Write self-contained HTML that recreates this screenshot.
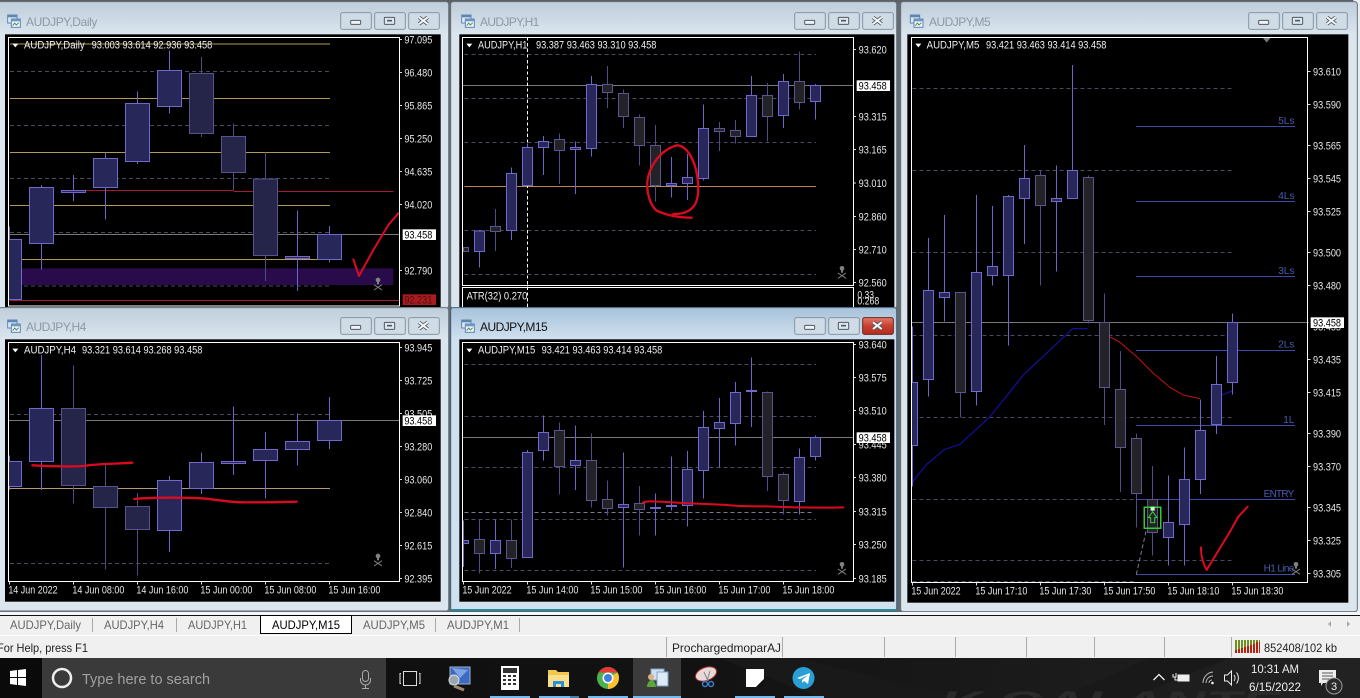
<!DOCTYPE html>
<html><head><meta charset="utf-8"><title>MT4</title>
<style>
html,body{margin:0;padding:0;width:1360px;height:698px;overflow:hidden;background:#e4ebf1}
svg{position:absolute;left:0;top:0;display:block}
text{font-family:"Liberation Sans",sans-serif}
.a{font-size:32px;fill:#e6e6e6}
.h{font-size:32px;fill:#f0f0f0}
.t{font-size:36px;fill:#8d99a5}
.l{font-size:30px;fill:#4a5bb0}
.k{font-size:32px;fill:#000}
.c{shape-rendering:crispEdges;fill:none;stroke-width:3}
.wu{stroke:#6f65c8}.wd{stroke:#4f4b86}
.bu{fill:#28275a;stroke:#7268cc;stroke-width:3;shape-rendering:crispEdges}
.bd{fill:#25254a;stroke:#57538f;stroke-width:3;shape-rendering:crispEdges}
.bk{fill:#232327;stroke:#5a5590;stroke-width:3;shape-rendering:crispEdges}
.g{stroke:#4a4a5e;stroke-dasharray:12 9}
.au{stroke:#b39a55}
.p{stroke:#777}
.tk{stroke:#ddd}
.r{fill:none;stroke:#dc0a20;stroke-linecap:round;stroke-linejoin:round}
.b{font-size:12px;fill:#666}
.s{font-size:12px;fill:#222}
.sp{stroke:#aaa;stroke-width:1;shape-rendering:crispEdges}
</style></head><body>
<svg width="1360" height="698" viewBox="0 0 4080 2094" xmlns="http://www.w3.org/2000/svg">
<defs>
<linearGradient id="f" gradientUnits="userSpaceOnUse" x1="0" y1="8" x2="0" y2="103"><stop offset="0" stop-color="#bfcedb"/><stop offset="1" stop-color="#dae5ee"/></linearGradient>
<linearGradient id="fa" gradientUnits="userSpaceOnUse" x1="0" y1="8" x2="0" y2="103"><stop offset="0" stop-color="#a8c2da"/><stop offset="1" stop-color="#cfe0ef"/></linearGradient>
<linearGradient id="rd" x1="0" y1="0" x2="0" y2="1"><stop offset="0" stop-color="#e0786a"/><stop offset=".5" stop-color="#c8402f"/><stop offset="1" stop-color="#b02a20"/></linearGradient>
<g id="bt">
<rect x="0" y="38" width="92" height="50" rx="6" fill="#cfdbe5" stroke="#8796a4" stroke-width="3"/>
<rect x="102" y="38" width="92" height="50" rx="6" fill="#cfdbe5" stroke="#8796a4" stroke-width="3"/>
<rect x="204" y="38" width="92" height="50" rx="6" fill="#cfdbe5" stroke="#8796a4" stroke-width="3"/>
<rect x="30" y="61" width="30" height="12" rx="2" fill="#eef3f7" stroke="#4d5a66" stroke-width="3"/>
<rect x="131" y="52" width="31" height="21" rx="2" fill="#dfe7ee" stroke="#4d5a66" stroke-width="3"/><path d="M139 62h15" stroke="#4d5a66" stroke-width="5"/>
</g>
<g id="x"><path d="M-13 -10L13 10M13 -10L-13 10" stroke="#4d5a66" stroke-width="11"/><path d="M-13 -10L13 10M13 -10L-13 10" stroke="#f4f7fa" stroke-width="6"/></g>
<g id="ic"><rect x="0" y="0" width="28" height="24" fill="#dfeaf4" stroke="#5d86b3" stroke-width="3"/><rect x="0" y="0" width="28" height="7" fill="#5d86b3"/><rect x="11" y="12" width="27" height="25" fill="#eef5fb" stroke="#5d86b3" stroke-width="3"/><rect x="11" y="12" width="27" height="7" fill="#6c95c2"/><path d="M15 32L21 24L26 30L33 23" fill="none" stroke="#5b8a5b" stroke-width="3"/></g>
<g id="sk"><circle cx="0" cy="-12" r="7" fill="#808080"/><rect x="-3" y="-6" width="6" height="7" fill="#808080"/><path d="M-12 2L12 18M12 2L-12 18" stroke="#808080" stroke-width="3"/></g>
</defs>

<rect width="4080" height="2094" fill="#636a72"/>
<rect x="0" y="0" width="4080" height="6" fill="#5a5f66"/>
<rect x="4060" y="0" width="20" height="1840" fill="#e6edf3"/>

<!-- DAILY -->
<rect x="-6" y="5" width="1352" height="920" rx="8" fill="url(#f)" stroke="#6a7078" stroke-width="3"/>
<use href="#ic" x="23" y="45"/>
<text x="78" y="78" class="t" textLength="214">AUDJPY,Daily</text>
<use href="#bt" x="1022" y="0"/><use href="#x" x="1270" y="62"/>
<rect x="15" y="103" width="1307" height="818" fill="#000"/>
<g>
<rect x="65" y="805" width="1115" height="50" fill="#290b4b"/>
<path class="c g" d="M30 214H990M30 376H990M30 535H990M30 697H990M30 858H990"/>
<path class="c au" d="M30 132H990M30 295H990M30 457H990M30 616H990M30 778H990"/>
<path class="c" stroke="#a8183a" d="M225 571H700M700 574H1180M30 901H1198"/>
<path class="c p" d="M25 703H1198"/>
<path class="c wu" d="M28 680V718M124 555V808M220 525V603M316 458V658M412 275V492M508 152V340M892 632V873M988 678V788"/>
<path class="c wd" d="M604 171V411M700 370V570M796 458V843"/>
<path class="bu" d="M25 718h40v180h-40zM88 562h73v168h-73zM184 571h73v6h-73zM280 475h73v88h-73zM376 310h73v174h-73zM472 211h73v108h-73zM856 769h73v6h-73zM952 703h73v75h-73z"/>
<path class="bd" d="M568 220h73v180h-73zM664 409h73v108h-73zM760 537h73v230h-73z"/>
<path class="r" stroke-width="6" d="M1060 778L1077 828L1120 750L1165 675L1195 640"/>
<use href="#sk" x="1134" y="852"/>
<rect x="25" y="112" width="1173" height="806" class="c" stroke="#fff"/>
<path d="M37 131H55L46 142Z" fill="#fff"/>
<text x="72" y="146" class="h" textLength="182" lengthAdjust="spacingAndGlyphs">AUDJPY,Daily</text><text x="275" y="146" class="h" textLength="362" lengthAdjust="spacingAndGlyphs">93.003 93.614 92.936 93.458</text>
<path class="c tk" d="M1198 118h8M1198 217h8M1198 316h8M1198 415h8M1198 514h8M1198 613h8M1198 811h8"/>
<text class="a" textLength="84" lengthAdjust="spacingAndGlyphs" x="1213" y="130">97.095</text><text class="a" textLength="84" lengthAdjust="spacingAndGlyphs" x="1213" y="229">96.480</text><text class="a" textLength="84" lengthAdjust="spacingAndGlyphs" x="1213" y="328">95.865</text><text class="a" textLength="84" lengthAdjust="spacingAndGlyphs" x="1213" y="427">95.250</text><text class="a" textLength="84" lengthAdjust="spacingAndGlyphs" x="1213" y="526">94.635</text><text class="a" textLength="84" lengthAdjust="spacingAndGlyphs" x="1213" y="625">94.020</text><text class="a" textLength="84" lengthAdjust="spacingAndGlyphs" x="1213" y="823">92.790</text>
<rect x="1208" y="688" width="100" height="32" fill="#fff"/><text class="k" textLength="84" lengthAdjust="spacingAndGlyphs" x="1213" y="716">93.458</text>
<rect x="1208" y="883" width="100" height="32" fill="#a81c20"/><text class="k" textLength="84" lengthAdjust="spacingAndGlyphs" x="1213" y="911" style="fill:#4a1015">92.231</text>
</g>

<!-- H1 -->
<g transform="translate(1350,0)">
<rect x="2" y="5" width="1338" height="920" rx="8" fill="url(#f)" stroke="#6a7078" stroke-width="3"/>
<use href="#ic" x="35" y="45"/>
<text x="90" y="78" class="t" textLength="178">AUDJPY,H1</text>
<use href="#bt" x="1034" y="0"/><use href="#x" x="1282" y="62"/>
<rect x="28" y="103" width="1305" height="818" fill="#000"/>
<path class="c g" d="M43 163H1098M43 295H1098M43 427H1098M43 691H1098M43 823H1098"/>
<path class="c" stroke="#b8894f" d="M43 559H1098"/>
<path class="c p" d="M37 256H1210"/>
<path class="c" stroke="#fff" stroke-dasharray="10 7" d="M232 112V921"/>
<path class="c wu" d="M88 690V802M184 502V720M232 430V556M280 408V525M376 424V582M424 228V470M664 471V592M712 462V600M760 313V542M904 228V409M1000 222V384M1096 252V358"/>
<path class="c wd" d="M136 627V753M328 400V552M472 198V324M520 268V384M568 343V497M616 375V604M808 366V453M856 360V430M952 249V424M1048 154V328"/>
<path class="bu" d="M73 693h31v61h-31zM169 520h31v171h-31zM217 442h31v114h-31zM265 424h31v18h-31zM361 442h31v6h-31zM409 253h31v192h-31zM649 550h31v6h-31zM697 532h31v18h-31zM745 385h31v151h-31zM889 286h31v123h-31zM985 244h31v102h-31zM1081 256h31v48h-31z"/>
<path class="bk" d="M40 743h16v11h-16zM121 680h31v14h-31zM313 418h31v33h-31zM457 253h31v24h-31zM505 280h31v69h-31zM553 352h31v84h-31zM601 436h31v120h-31zM793 385h31v9h-31zM841 391h31v18h-31zM937 286h31v63h-31zM1033 244h31v63h-31z"/>
<path class="r" stroke-width="7" d="M725 653C700 653 660 650 620 632C600 615 590 580 592 545C597 500 630 450 680 436C710 436 735 480 742 530C748 570 745 610 725 625C710 640 690 642 670 642"/>
<use href="#sk" x="1176" y="817"/>
<rect x="37" y="112" width="1173" height="744" class="c" stroke="#fff"/>
<rect x="37" y="862" width="1173" height="70" class="c" stroke="#fff"/>
<path d="M49 131H67L58 142Z" fill="#fff"/>
<text x="84" y="146" class="h" textLength="148" lengthAdjust="spacingAndGlyphs">AUDJPY,H1</text><text x="258" y="146" class="h" textLength="361" lengthAdjust="spacingAndGlyphs">93.387 93.463 93.310 93.458</text>
<text x="50" y="899" class="h" textLength="182" lengthAdjust="spacingAndGlyphs">ATR(32) 0.270</text>
<path class="c tk" d="M1210 148h8M1210 349h8M1210 448h8M1210 549h8M1210 649h8M1210 748h8M1210 847h8"/>
<text class="a" textLength="84" lengthAdjust="spacingAndGlyphs" x="1226" y="160">93.620</text><text class="a" textLength="84" lengthAdjust="spacingAndGlyphs" x="1226" y="361">93.315</text><text class="a" textLength="84" lengthAdjust="spacingAndGlyphs" x="1226" y="460">93.165</text><text class="a" textLength="84" lengthAdjust="spacingAndGlyphs" x="1226" y="561">93.010</text><text class="a" textLength="84" lengthAdjust="spacingAndGlyphs" x="1226" y="661">92.860</text><text class="a" textLength="84" lengthAdjust="spacingAndGlyphs" x="1226" y="760">92.710</text><text class="a" textLength="84" lengthAdjust="spacingAndGlyphs" x="1226" y="859">92.560</text>
<rect x="1220" y="241" width="100" height="32" fill="#fff"/><text class="k" textLength="84" lengthAdjust="spacingAndGlyphs" x="1226" y="268">93.458</text>
<text class="a" x="1222" y="895" textLength="50" lengthAdjust="spacingAndGlyphs">0.33</text><text class="a" x="1222" y="914" textLength="66" lengthAdjust="spacingAndGlyphs">0.268</text>
</g>

<!-- M5 -->
<g transform="translate(2700,0)">
<rect x="2" y="5" width="1370" height="1830" rx="8" fill="url(#f)" stroke="#6a7078" stroke-width="3"/>
<use href="#ic" x="31" y="45"/>
<text x="87" y="78" class="t" textLength="185">AUDJPY,M5</text>
<use href="#bt" x="1046" y="0"/><use href="#x" x="1294" y="62"/>
<rect x="22" y="103" width="1323" height="1705" fill="#000"/>
<path class="c g" d="M38 265H1000M38 511H1000M38 757H1000M38 1006H1000M38 1252H1000M38 1498H708M38 1681H996M38 1744H708"/>
<path class="c" stroke="#3b4ba8" d="M708 379H1185M708 604H1185M708 829H1185M708 1051H1185M708 1276H1185M708 1498H1185M708 1723H1185"/>
<path class="c p" d="M34 967H1225"/>
<text class="l" x="1183" y="372" text-anchor="end">5Ls</text><text class="l" x="1183" y="597" text-anchor="end">4Ls</text><text class="l" x="1183" y="822" text-anchor="end">3Ls</text><text class="l" x="1183" y="1043" text-anchor="end">2Ls</text><text class="l" x="1183" y="1269" text-anchor="end">1L</text><text class="l" x="1183" y="1491" text-anchor="end" textLength="92">ENTRY</text><text class="l" x="1183" y="1715" text-anchor="end" textLength="92">H1 Line</text>
<path fill="none" stroke="#10108c" stroke-width="4" d="M38 1445L80 1393L134 1348L180 1333L270 1250L370 1125L450 1050L518 986H563M945 1193L996 1173"/>
<path fill="none" stroke="#c01414" stroke-width="3" d="M614 1002L660 1027L710 1070L760 1120L810 1162L850 1185L900 1196"/>
<path class="c wu" d="M38 980V1460M86 714V1190M134 645V965M230 585V1217M278 618V857M326 585V1037M374 435V732M470 496V815M518 195V595M806 1426V1697M854 1342V1697M902 1198V1482M950 1068V1302M998 940V1183"/>
<path class="c wd" d="M182 877V1252M422 511V857M566 526V970M614 880V1275M662 1053V1476M710 1300V1583M758 1398V1667"/>
<path class="bu" d="M35 1147h18v190h-18zM70 871h31v267h-31zM118 877h31v15h-31zM214 817h31v357h-31zM262 799h31v27h-31zM310 589h31v237h-31zM358 535h31v60h-31zM454 595h31v9h-31zM502 511h31v84h-31zM790 1567h31v45h-31zM838 1438h31v135h-31zM886 1291h31v147h-31zM934 1153h31v120h-31zM982 967h31v180h-31z"/>
<path class="bk" d="M166 877h31v300h-31zM406 526h31v90h-31zM550 532h31v429h-31zM598 967h31v195h-31zM646 1168h31v174h-31zM694 1315h31v165h-31zM742 1498h31v99h-31z"/>
<path fill="none" stroke="#7d7d9a" stroke-width="3" stroke-dasharray="12 8" d="M709 1723L740 1585"/>
<rect x="733" y="1522" width="49" height="63" class="c" stroke="#2ecc2e" style="stroke-width:4"/>
<path d="M758 1535L771 1553H764V1568H752V1553H745Z" fill="none" stroke="#36d036" stroke-width="3"/>
<rect x="752" y="1520" width="12" height="12" fill="#c8ffc0"/>
<path class="r" stroke-width="6" d="M903 1642C902 1670 912 1695 920 1710L990 1595L1015 1550L1043 1520"/>
<use href="#sk" x="1188" y="1705"/>
<path d="M1088 113H1112L1100 128Z" fill="#777"/>
<rect x="34" y="112" width="1189" height="1635" class="c" stroke="#fff"/>
<path d="M46 131H64L55 142Z" fill="#fff"/>
<text x="80" y="146" class="h" textLength="158" lengthAdjust="spacingAndGlyphs">AUDJPY,M5</text><text x="258" y="146" class="h" textLength="361" lengthAdjust="spacingAndGlyphs">93.421 93.463 93.414 93.458</text>
<path class="c tk" d="M1223 214h8M1223 313h8M1223 436h8M1223 535h8M1223 634h8M1223 757h8M1223 856h8M1223 1078h8M1223 1177h8M1223 1300h8M1223 1399h8M1223 1522h8M1223 1621h8M1223 1720h8M37 1747v9M229 1747v9M421 1747v9M613 1747v9M805 1747v9M997 1747v9"/>
<text class="a" textLength="84" lengthAdjust="spacingAndGlyphs" x="1239" y="226">93.610</text><text class="a" textLength="84" lengthAdjust="spacingAndGlyphs" x="1239" y="325">93.590</text><text class="a" textLength="84" lengthAdjust="spacingAndGlyphs" x="1239" y="448">93.565</text><text class="a" textLength="84" lengthAdjust="spacingAndGlyphs" x="1239" y="547">93.545</text><text class="a" textLength="84" lengthAdjust="spacingAndGlyphs" x="1239" y="646">93.525</text><text class="a" textLength="84" lengthAdjust="spacingAndGlyphs" x="1239" y="769">93.500</text><text class="a" textLength="84" lengthAdjust="spacingAndGlyphs" x="1239" y="868">93.480</text><text class="a" textLength="84" lengthAdjust="spacingAndGlyphs" x="1239" y="1090">93.435</text><text class="a" textLength="84" lengthAdjust="spacingAndGlyphs" x="1239" y="1189">93.415</text><text class="a" textLength="84" lengthAdjust="spacingAndGlyphs" x="1239" y="1312">93.390</text><text class="a" textLength="84" lengthAdjust="spacingAndGlyphs" x="1239" y="1411">93.370</text><text class="a" textLength="84" lengthAdjust="spacingAndGlyphs" x="1239" y="1534">93.345</text><text class="a" textLength="84" lengthAdjust="spacingAndGlyphs" x="1239" y="1633">93.325</text><text class="a" textLength="84" lengthAdjust="spacingAndGlyphs" x="1239" y="1732">93.305</text>
<text class="a" textLength="84" lengthAdjust="spacingAndGlyphs" x="1239" y="992">93.455</text>
<rect x="1232" y="952" width="100" height="32" fill="#fff"/><text class="k" textLength="84" lengthAdjust="spacingAndGlyphs" x="1239" y="979">93.458</text>
<text class="a" textLength="148" lengthAdjust="spacingAndGlyphs" x="34" y="1784">15 Jun 2022</text><text class="a" textLength="156" lengthAdjust="spacingAndGlyphs" x="226" y="1784">15 Jun 17:10</text><text class="a" textLength="156" lengthAdjust="spacingAndGlyphs" x="418" y="1784">15 Jun 17:30</text><text class="a" textLength="156" lengthAdjust="spacingAndGlyphs" x="610" y="1784">15 Jun 17:50</text><text class="a" textLength="156" lengthAdjust="spacingAndGlyphs" x="802" y="1784">15 Jun 18:10</text><text class="a" textLength="156" lengthAdjust="spacingAndGlyphs" x="994" y="1784">15 Jun 18:30</text>
</g>

<!-- H4 -->
<g transform="translate(0,915)">
<rect x="-6" y="8" width="1352" height="910" rx="8" fill="url(#f)" stroke="#6a7078" stroke-width="3"/>
<use href="#ic" x="23" y="45"/>
<text x="78" y="78" class="t" textLength="181">AUDJPY,H4</text>
<use href="#bt" x="1022" y="0"/><use href="#x" x="1270" y="62"/>
<rect x="15" y="103" width="1307" height="787" fill="#000"/>
<path class="c g" d="M30 328H990M30 775H990"/>
<path class="c" stroke="#b39a70" d="M30 550H990"/>
<path class="c p" d="M25 346H1198"/>
<path class="c wu" d="M28 452V555M124 150V555M508 513V741M604 443V567M700 305V510M796 381V581M892 325V481M988 276V432"/>
<path class="c wd" d="M220 181V595M316 480V793M412 564V812"/>
<path class="bu" d="M25 469h40v76h-40zM88 310h73v159h-73zM472 526h73v151h-73zM568 472h73v78h-73zM664 469h73v6h-73zM760 433h73v33h-73zM856 409h73v24h-73zM952 346h73v60h-73z"/>
<path class="bd" d="M184 310h73v231h-73zM280 544h73v63h-73zM376 604h73v70h-73z"/>
<path class="r" stroke-width="7" d="M97 481C150 484 200 486 250 483C300 475 350 477 397 473M403 582C450 577 560 577 620 581C670 587 700 593 750 592C800 592 850 591 890 590"/>
<use href="#sk" x="1134" y="765"/>
<rect x="25" y="112" width="1173" height="717" class="c" stroke="#fff"/>
<path d="M37 131H55L46 142Z" fill="#fff"/>
<text x="72" y="146" class="h" textLength="156" lengthAdjust="spacingAndGlyphs">AUDJPY,H4</text><text x="246" y="146" class="h" textLength="361" lengthAdjust="spacingAndGlyphs">93.321 93.614 93.268 93.458</text>
<path class="c tk" d="M1198 127h8M1198 226h8M1198 325h8M1198 424h8M1198 523h8M1198 622h8M1198 721h8M1198 820h8M28 829v9M220 829v9M412 829v9M604 829v9M796 829v9M988 829v9"/>
<text class="a" textLength="84" lengthAdjust="spacingAndGlyphs" x="1213" y="139">93.945</text><text class="a" textLength="84" lengthAdjust="spacingAndGlyphs" x="1213" y="238">93.725</text><text class="a" textLength="84" lengthAdjust="spacingAndGlyphs" x="1213" y="337">93.505</text><text class="a" textLength="84" lengthAdjust="spacingAndGlyphs" x="1213" y="436">93.280</text><text class="a" textLength="84" lengthAdjust="spacingAndGlyphs" x="1213" y="535">93.060</text><text class="a" textLength="84" lengthAdjust="spacingAndGlyphs" x="1213" y="634">92.840</text><text class="a" textLength="84" lengthAdjust="spacingAndGlyphs" x="1213" y="733">92.615</text><text class="a" textLength="84" lengthAdjust="spacingAndGlyphs" x="1213" y="832">92.395</text>
<rect x="1208" y="331" width="100" height="32" fill="#fff"/><text class="k" textLength="84" lengthAdjust="spacingAndGlyphs" x="1213" y="358">93.458</text>
<text class="a" textLength="148" lengthAdjust="spacingAndGlyphs" x="25" y="866">14 Jun 2022</text><text class="a" textLength="156" lengthAdjust="spacingAndGlyphs" x="217" y="866">14 Jun 08:00</text><text class="a" textLength="156" lengthAdjust="spacingAndGlyphs" x="409" y="866">14 Jun 16:00</text><text class="a" textLength="156" lengthAdjust="spacingAndGlyphs" x="601" y="866">15 Jun 00:00</text><text class="a" textLength="156" lengthAdjust="spacingAndGlyphs" x="793" y="866">15 Jun 08:00</text><text class="a" textLength="156" lengthAdjust="spacingAndGlyphs" x="985" y="866">15 Jun 16:00</text>
</g>

<!-- M15 active -->
<g transform="translate(1350,915)">
<rect x="2" y="8" width="1338" height="910" rx="8" fill="url(#fa)" stroke="#3d5f7c" stroke-width="3"/>
<rect x="2" y="912" width="1338" height="6" fill="#2e8a94"/>
<use href="#ic" x="35" y="45"/>
<text x="90" y="78" class="t" textLength="203" style="fill:#111">AUDJPY,M15</text>
<use href="#bt" x="1034" y="0"/>
<rect x="1238" y="38" width="92" height="50" rx="6" fill="url(#rd)" stroke="#7a2a22" stroke-width="3"/><use href="#x" x="1282" y="62"/>
<rect x="28" y="103" width="1305" height="787" fill="#000"/>
<path class="c g" d="M43 178H1098M43 335H1098M43 487H1098M43 643H1098M43 797H1098"/>
<path class="c" stroke="#7a7a90" stroke-dasharray="12 9" d="M43 622H1092"/>
<path class="c p" d="M37 397H1210"/>
<path class="c wu" d="M40 646V786M136 643V792M232 435V757M280 331V466M376 361V555M520 443V788M616 565V692M664 454V616M712 438V665M760 318V581M808 279V487M856 231V421M904 157V366M1048 430V628M1096 391V467"/>
<path class="c wd" d="M88 643V805M184 643V789M328 352V568M424 385V608M472 526V631M568 543V692M952 259V558M1000 502V628"/>
<path class="bu" d="M40 707h16v9h-16zM121 706h31v39h-31zM217 442h31v315h-31zM265 382h31v54h-31zM361 466h31v16h-31zM505 598h31v9h-31zM601 607h31v3h-31zM649 601h31v3h-31zM697 493h31v108h-31zM745 367h31v129h-31zM793 352h31v18h-31zM841 262h31v93h-31zM889 256h31v3h-31zM1033 457h31v132h-31zM1081 397h31v57h-31z"/>
<path class="bk" d="M73 703h31v42h-31zM169 706h31v54h-31zM313 376h31v108h-31zM409 466h31v120h-31zM457 583h31v27h-31zM553 595h31v18h-31zM937 262h31v252h-31zM985 508h31v78h-31z"/>
<path class="r" stroke-width="6" d="M578 593C590 587 610 589 650 591C720 596 780 597 830 600C860 604 900 604 950 604C1020 607 1100 609 1180 607"/>
<use href="#sk" x="1176" y="790"/>
<rect x="37" y="112" width="1173" height="717" class="c" stroke="#fff"/>
<path d="M49 131H67L58 142Z" fill="#fff"/>
<text x="84" y="146" class="h" textLength="172" lengthAdjust="spacingAndGlyphs">AUDJPY,M15</text><text x="275" y="146" class="h" textLength="362" lengthAdjust="spacingAndGlyphs">93.421 93.463 93.414 93.458</text>
<path class="c tk" d="M1210 118h8M1210 217h8M1210 316h8M1210 419h8M1210 517h8M1210 619h8M1210 718h8M1210 820h8M40 829v9M232 829v9M424 829v9M616 829v9M808 829v9M1000 829v9"/>
<text class="a" textLength="84" lengthAdjust="spacingAndGlyphs" x="1226" y="130">93.640</text><text class="a" textLength="84" lengthAdjust="spacingAndGlyphs" x="1226" y="229">93.575</text><text class="a" textLength="84" lengthAdjust="spacingAndGlyphs" x="1226" y="328">93.510</text><text class="a" textLength="84" lengthAdjust="spacingAndGlyphs" x="1226" y="431">93.445</text><text class="a" textLength="84" lengthAdjust="spacingAndGlyphs" x="1226" y="529">93.380</text><text class="a" textLength="84" lengthAdjust="spacingAndGlyphs" x="1226" y="631">93.315</text><text class="a" textLength="84" lengthAdjust="spacingAndGlyphs" x="1226" y="730">93.250</text><text class="a" textLength="84" lengthAdjust="spacingAndGlyphs" x="1226" y="832">93.185</text>
<rect x="1220" y="382" width="100" height="32" fill="#fff"/><text class="k" textLength="84" lengthAdjust="spacingAndGlyphs" x="1226" y="409">93.458</text>
<text class="a" textLength="148" lengthAdjust="spacingAndGlyphs" x="37" y="866">15 Jun 2022</text><text class="a" textLength="156" lengthAdjust="spacingAndGlyphs" x="229" y="866">15 Jun 14:00</text><text class="a" textLength="156" lengthAdjust="spacingAndGlyphs" x="421" y="866">15 Jun 15:00</text><text class="a" textLength="156" lengthAdjust="spacingAndGlyphs" x="613" y="866">15 Jun 16:00</text><text class="a" textLength="156" lengthAdjust="spacingAndGlyphs" x="805" y="866">15 Jun 17:00</text><text class="a" textLength="156" lengthAdjust="spacingAndGlyphs" x="997" y="866">15 Jun 18:00</text>
</g>
</svg>

<svg width="1360" height="698" viewBox="0 0 1360 698" xmlns="http://www.w3.org/2000/svg">
<defs><linearGradient id="tb" x1="0" y1="0" x2="1" y2="0"><stop offset="0" stop-color="#0d0d0d"/><stop offset=".5" stop-color="#121212"/><stop offset="1" stop-color="#222"/></linearGradient></defs>
<!-- tab bar -->
<rect x="0" y="612" width="1360" height="46" fill="#f0f0f0"/>
<rect x="0" y="612" width="1360" height="3" fill="#f4f7fa"/>
<rect x="0" y="615" width="1360" height="1" fill="#111"/>
<rect x="0" y="635" width="1360" height="1" fill="#fff"/>
<text class="b" x="10" y="629" textLength="71" lengthAdjust="spacingAndGlyphs">AUDJPY,Daily</text>
<path class="sp" d="M92.500 618V632M176.500 618V632M519.500 618V632M435.500 618V632"/>
<text class="b" x="104" y="629" textLength="60" lengthAdjust="spacingAndGlyphs">AUDJPY,H4</text>
<text class="b" x="188" y="629" textLength="59" lengthAdjust="spacingAndGlyphs">AUDJPY,H1</text>
<rect x="260.500" y="615.500" width="91" height="18" fill="#fff" stroke="#000"/>
<text x="272" y="629" font-size="12" fill="#000" textLength="68" lengthAdjust="spacingAndGlyphs">AUDJPY,M15</text>
<text class="b" x="363" y="629" textLength="62" lengthAdjust="spacingAndGlyphs">AUDJPY,M5</text>
<text class="b" x="447" y="629" textLength="62" lengthAdjust="spacingAndGlyphs">AUDJPY,M1</text>
<path d="M1331 621l-3 3 3 3zM1347 621l3 3-3 3z" fill="#aaa"/>
<!-- status -->
<text class="s" x="-3" y="652" textLength="91" lengthAdjust="spacingAndGlyphs">For Help, press F1</text>
<path class="sp" d="M666.500 637V657M782.500 637V657M884.500 637V657M955.500 637V657M1026.500 637V657M1094.500 637V657M1164.500 637V657M1231.500 637V657"/>
<text class="s" x="672" y="652" textLength="109" lengthAdjust="spacingAndGlyphs">ProchargedmoparAJ</text>
<g shape-rendering="crispEdges">
<rect x="1235" y="640" width="25" height="13" fill="#6f8f22"/>
<path d="M1235 650L1238 650V649H1241V648H1244V647H1247V646H1250V645H1253V644H1256V642H1260V653H1235Z" fill="#b82010"/>
<path fill="#f0f0f0" d="M1237 640h1v13h-1zM1240 640h1v13h-1zM1243 640h1v13h-1zM1246 640h1v13h-1zM1249 640h1v13h-1zM1252 640h1v13h-1zM1255 640h1v13h-1zM1258 640h1v13h-1z"/>
</g>
<text class="s" x="1264" y="652" textLength="73" lengthAdjust="spacingAndGlyphs">852408/102 kb</text>
<!-- taskbar -->
<rect x="0" y="658" width="1360" height="40" fill="url(#tb)"/>
<path d="M720 658H800L960 698H820ZM1150 658H1230L1130 698H1060Z" fill="#191919"/>
<text x="940" y="712" font-size="30" font-style="italic" font-weight="bold" fill="#2a2a2a" textLength="340" lengthAdjust="spacingAndGlyphs">K GALANTE</text>
<rect x="0" y="658" width="42" height="40" fill="#0a0a0a"/>
<rect x="42" y="658" width="344" height="40" fill="#3a3a3a"/>
<rect x="633" y="658" width="48" height="40" fill="#3b3b3b"/>
<path d="M10 671l7-1v7h-7zM18 670l8-1v8h-8zM10 678h7v7l-7-1zM18 678h8v8l-8-1z" fill="#fff"/>
<circle cx="62" cy="678" r="9" fill="none" stroke="#eee" stroke-width="2.500"/>
<text x="82" y="684" font-size="15" fill="#a0a0a0" textLength="128" lengthAdjust="spacingAndGlyphs">Type here to search</text>
<rect x="362.500" y="670.500" width="6" height="11" rx="3" fill="none" stroke="#aaa"/><path d="M360.500 678v2a5 5 0 0 0 10 0v-2M365.500 685v3M362 688.500h7" fill="none" stroke="#aaa"/>
<rect x="403.500" y="671.500" width="13" height="14" fill="none" stroke="#ddd"/><path d="M401 673.500h-1v10h1M419 673.500h1v10h-1" fill="none" stroke="#ddd"/>
<!-- network -->
<rect x="450" y="667" width="20" height="17" fill="#3d6bc4" stroke="#9fb0cc"/><path d="M452 668l8 10 8-8" fill="#7fa3e0"/><circle cx="454" cy="680" r="5" fill="#9aa6b0" stroke="#ddd"/><path d="M454 686l10 4" stroke="#a08a70" stroke-width="3"/>
<!-- calc -->
<rect x="501" y="666" width="18" height="24" fill="#fff"/><rect x="503" y="668" width="14" height="5" fill="#333"/>
<path d="M503 676h3M508 676h3M513 676h3M503 680h3M508 680h3M513 680h3M503 684h3M508 684h3M513 684h3" stroke="#333" stroke-width="2"/>
<!-- folder -->
<path d="M548 670h8l2 2h11v15h-21z" fill="#f2c84c"/><rect x="548" y="675" width="21" height="12" fill="#f9df8b"/><path d="M553 681h11v6h-3v-3h-5v3h-3z" fill="#2a8fd6"/>
<!-- chrome -->
<circle cx="608" cy="678" r="11" fill="#4caf50"/>
<path d="M598.500 672.500A11 11 0 0 1 617.500 672.500H608z" fill="#e53935"/>
<path d="M617.500 672.500A11 11 0 0 1 608 689L608 678z" fill="#fbc02d"/>
<circle cx="608" cy="678" r="5.500" fill="#fff"/><circle cx="608" cy="678" r="4" fill="#3f7fe0"/>
<!-- mt4 -->
<rect x="651" y="669" width="13" height="11" fill="#cfe0ef" stroke="#7ea3c8"/><rect x="657" y="672" width="11" height="14" fill="#dfeaf4" stroke="#7ea3c8"/>
<circle cx="651" cy="677" r="3" fill="#e0b080"/><path d="M647 687a4 6 0 0 1 9 0z" fill="#5aa83a"/>
<!-- snip -->
<ellipse cx="706" cy="674" rx="11" ry="6.500" fill="#e8d8d8" stroke="#a02a2a" transform="rotate(-20 706 674)"/>
<path d="M704 672l4 9M710 671l-3 10" stroke="#888"/><circle cx="705" cy="684" r="2.500" fill="none" stroke="#3a7fd0" stroke-width="1.500"/><circle cx="711" cy="684" r="2.500" fill="none" stroke="#3a7fd0" stroke-width="1.500"/>
<!-- sticky -->
<path d="M746 669h18v10l-8 8h-10z" fill="#fff"/><path d="M764 679v8h-8z" fill="#111"/>
<!-- telegram -->
<circle cx="803.500" cy="678" r="11" fill="#2a9fd6"/><path d="M797 678l13-5-2 11-4-3-2 2v-3l6-5-8 4z" fill="#fff"/>
<!-- underlines -->
<g fill="#76b9ed"><rect x="490" y="696" width="40" height="2"/><rect x="539" y="696" width="31" height="2"/><rect x="570" y="696" width="9" height="2" fill="#4a7ea3"/><rect x="588" y="696" width="40" height="2"/><rect x="633" y="696" width="48" height="2"/><rect x="735" y="696" width="40" height="2"/><rect x="784" y="696" width="40" height="2"/></g>
<!-- tray -->
<path d="M1153.500 680l5.500-5.500 5.500 5.500" fill="none" stroke="#eee" stroke-width="1.300"/>
<rect x="1177.500" y="674.500" width="12" height="7" fill="#eee"/><path d="M1176 673v4h-3v-3M1175 677v3h3" fill="none" stroke="#eee"/>
<path d="M1203 683a11 11 0 0 1 10-11M1206 683a7 7 0 0 1 7-7M1209 683a3 3 0 0 1 3-3" fill="none" stroke="#bbb"/><circle cx="1212.500" cy="683" r="1.300" fill="#eee"/>
<path d="M1224.500 675h3l4-4v14l-4-4h-3zM1234 675a5 5 0 0 1 0 6M1236.500 672.500a9 9 0 0 1 0 11" fill="none" stroke="#eee"/>
<text x="1251" y="673" font-size="12" fill="#eee" textLength="48" lengthAdjust="spacingAndGlyphs">10:31 AM</text>
<text x="1249" y="691" font-size="12" fill="#eee" textLength="52" lengthAdjust="spacingAndGlyphs">6/15/2022</text>
<path d="M1319 670h17v13h-13l-2 3v-3h-2z" fill="#eee"/><path d="M1322 673h11M1322 676h11M1322 679h11" stroke="#555"/>
<circle cx="1334" cy="686" r="8" fill="#2a2a2a" stroke="#999"/><text x="1334" y="690" font-size="11" fill="#eee" text-anchor="middle">3</text>
</svg>
</body></html>
